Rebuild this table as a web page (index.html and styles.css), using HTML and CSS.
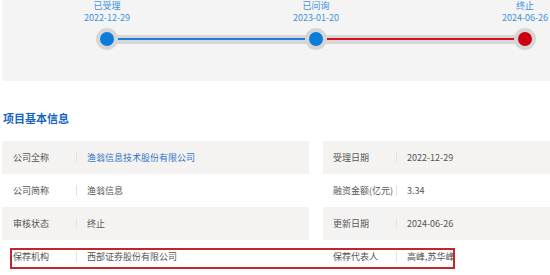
FILE: index.html
```html
<!DOCTYPE html>
<html lang="zh-CN">
<head>
<meta charset="utf-8">
<title>项目基本信息</title>
<link rel="stylesheet" href="styles.css">
</head>
<body>
<div class="progress">
  <div class="timeline">
    <div class="labels">
      <div class="stop"><span>已受理</span><span>2022-12-29</span></div>
      <div class="stop"><span>已问询</span><span>2023-01-20</span></div>
      <div class="stop"><span>终止</span><span>2024-06-26</span></div>
    </div>
    <div class="track">
      <span class="node blue"></span>
      <span class="node blue"></span>
      <span class="node red"></span>
    </div>
  </div>
</div>

<h2 class="title">项目基本信息</h2>

<div class="table">
  <div class="row">
    <div class="cell left"><span class="label">公司全称</span><span class="value link">渔翁信息技术股份有限公司</span></div>
    <div class="cell right"><span class="label">受理日期</span><span class="value">2022-12-29</span></div>
  </div>
  <div class="row">
    <div class="cell left"><span class="label">公司简称</span><span class="value">渔翁信息</span></div>
    <div class="cell right"><span class="label">融资金额(亿元)</span><span class="value">3.34</span></div>
  </div>
  <div class="row">
    <div class="cell left"><span class="label">审核状态</span><span class="value">终止</span></div>
    <div class="cell right"><span class="label">更新日期</span><span class="value">2024-06-26</span></div>
  </div>
  <div class="row">
    <div class="cell left"><span class="label">保荐机构</span><span class="value">西部证券股份有限公司</span></div>
    <div class="cell right"><span class="label">保荐代表人</span><span class="value">高峰,苏华峰</span></div>
    <div class="mark"></div>
  </div>
</div>
</body>
</html>
```

FILE: styles.css
```css
* { box-sizing: border-box; }
body {
  margin: 0;
  background: #fff;
  font-family: "Noto Sans CJK SC", "Noto Sans", sans-serif;
  color: #555;
}
.progress {
  margin-left: 2px;
  height: 81px;
  background: #f4f4f4;
  padding-top: 0;
}
.timeline {
  margin-left: 105px;
  width: 418px;
}
.labels {
  display: flex;
  justify-content: space-between;
}
.stop {
  width: 0;
  display: flex;
  flex-direction: column;
  align-items: center;
  font-size: 9px;
  line-height: 12px;
  color: #3d92dc;
  white-space: nowrap;
}
.track {
  margin-top: 4px;
  height: 22px;
  display: flex;
  justify-content: space-between;
  align-items: center;
  background:
    linear-gradient(to right, #1a7ddb 50%, #d3101c 50%) center / 100% 2px no-repeat,
    linear-gradient(#d7d7d7, #d7d7d7) center / 100% 9px no-repeat;
}
.node {
  width: 22px;
  height: 22px;
  margin: 0 -11px;
  border-radius: 50%;
  border: 4px solid #d6d6d6;
  flex: none;
}
.node.blue { background: #0c7cdb; }
.node.red { background: #cc0012; }

.title {
  margin: 29px 0 15px 3px;
  font-size: 11px;
  line-height: 16px;
  font-weight: 700;
  color: #1565c0;
}

.table {
  margin-left: 2px;
}
.row {
  position: relative;
  display: grid;
  grid-template-columns: 307px 227px;
  column-gap: 14px;
  height: 33px;
}
.row:nth-child(odd) .cell { background: #f4f3f1; }
.cell {
  display: flex;
  align-items: center;
  font-size: 9px;
  line-height: 12px;
  white-space: nowrap;
}
.cell.left { padding-left: 11px; }
.cell.right { padding-left: 10px; }
.label {
  width: 64px;
  color: #555;
  border-right: 1px solid #e3e3e3;
  height: 11px;
  line-height: 11px;
  flex: none;
}
.value {
  padding-left: 10px;
  color: #555;
}
.value.link { color: #2f73c8; }
.mark {
  position: absolute;
  left: 8px;
  top: 8px;
  width: 445px;
  height: 21px;
  border: 2px solid #c1262c;
}
```
